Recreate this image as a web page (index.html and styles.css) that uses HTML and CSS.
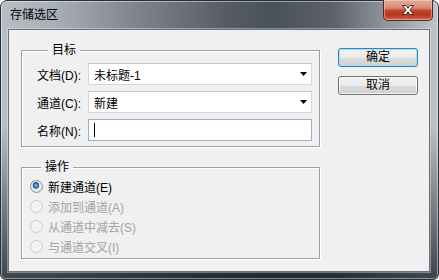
FILE: index.html
```html
<!DOCTYPE html>
<html lang="zh-CN">
<head>
    <meta charset="UTF-8">
    <meta name="viewport" content="width=device-width, initial-scale=1.0">
    <title>存储选区</title>
    <link rel="stylesheet" href="styles.css">
</head>
<body>
    <div class="window">
        <div class="titlebar">
            <span class="title">存储选区</span>
            <button class="close" title="关闭">
                <svg width="14" height="10" viewBox="0 0 14 10">
                    <path d="M1.5 0.5 L5 0.5 L7 3.2 L9 0.5 L12.5 0.5 L9 5 L12.5 9.5 L9 9.5 L7 6.8 L5 9.5 L1.5 9.5 L5 5 Z" fill="#fff" stroke="#4a2a24" stroke-width="1" stroke-linejoin="round"/>
                </svg>
            </button>
        </div>

        <div class="client">
            <div class="main">
                <fieldset class="group target">
                    <legend>目标</legend>
                    <div class="row">
                        <label>文档(D):</label>
                        <div class="combo">
                            <span>未标题-1</span>
                            <svg class="arrow" width="7" height="4" viewBox="0 0 7 4"><path d="M0 0 H7 L3.5 4 Z" fill="#000"/></svg>
                        </div>
                    </div>
                    <div class="row">
                        <label>通道(C):</label>
                        <div class="combo">
                            <span>新建</span>
                            <svg class="arrow" width="7" height="4" viewBox="0 0 7 4"><path d="M0 0 H7 L3.5 4 Z" fill="#000"/></svg>
                        </div>
                    </div>
                    <div class="row">
                        <label>名称(N):</label>
                        <div class="edit"><span class="caret"></span></div>
                    </div>
                </fieldset>

                <fieldset class="group ops">
                    <legend>操作</legend>
                    <label class="option"><input type="radio" name="op" checked> 新建通道(E)</label>
                    <label class="option disabled"><input type="radio" name="op" disabled> 添加到通道(A)</label>
                    <label class="option disabled"><input type="radio" name="op" disabled> 从通道中减去(S)</label>
                    <label class="option disabled"><input type="radio" name="op" disabled> 与通道交叉(I)</label>
                </fieldset>
            </div>

            <div class="buttons">
                <button class="btn default">确定</button>
                <button class="btn">取消</button>
            </div>
        </div>
    </div>
</body>
</html>
```

FILE: styles.css
```css
html, body { margin: 0; padding: 0; background: #fff; }
body { font-family: 'Liberation Sans', 'Noto Sans CJK SC', sans-serif; font-size: 12px; color: #000; }

.window {
    width: 439px; height: 280px; box-sizing: border-box;
    display: flex; flex-direction: column;
    border: 1px solid #2a2f35; border-radius: 7px 7px 6px 6px;
    box-shadow: inset 0 0 0 1px rgba(255,255,255,0.45);
    background:
        linear-gradient(to bottom, rgba(0,0,0,0) 0, rgba(0,0,0,0) 45%, rgba(16,28,36,0.75) 100%),
        linear-gradient(to right, #b8bec5 0%, #a9afb6 12%, #7c828a 32%, #555c66 52%, #48505a 62%, #5c626a 76%, #8f959c 88%, #bfc4c9 100%);
}

.titlebar { height: 28px; display: flex; align-items: flex-start; padding: 0 5px 0 9px; }
.title { line-height: 28px; color: #000; }
.close {
    margin-left: auto; margin-top: -1px; width: 50px; height: 21px; padding: 0;
    display: flex; align-items: center; justify-content: center;
    border: 1px solid #4b2b26; border-top: none; border-radius: 0 0 5px 5px;
    background: linear-gradient(to bottom, #e8ab9c 0%, #d98a76 40%, #c4442d 52%, #b8341e 75%, #cf6a52 100%);
    box-shadow: inset 0 0 0 1px rgba(255,220,210,0.45);
}

.client {
    flex: 1; margin: 0 8px 7px 7px; display: flex;
    background: #f0f0f0; border: 1px solid #68717c;
    box-shadow: 0 0 0 1px rgba(255,255,255,0.35);
}

.main { padding: 12px 0 0 12px; }

.group {
    margin: 0; padding: 0; width: 299px; box-sizing: border-box;
    border: 1px solid #a0a0a0;
    box-shadow: 1px 1px 0 #fff, inset 1px 1px 0 #fff;
}
.group legend { margin-left: 11px; padding: 0 4px; line-height: 16px; background: #f0f0f0; }

.target { padding: 5px 6px 5px 15px; display: flex; flex-direction: column; gap: 6px; }
.row { display: flex; align-items: center; height: 22px; }
.row label { width: 51px; }
.combo, .edit {
    width: 224px; height: 22px; box-sizing: border-box; background: #fff;
    display: flex; align-items: center; padding-left: 5px;
}
.combo { border: 1px solid #d4d7db; border-top-color: #c2c5ca; }
.combo .arrow { margin-left: auto; margin-right: 4px; }
.edit { border: 1px solid #97afcb; }
.caret { width: 1px; height: 14px; background: #000; }

.ops { margin-top: 12px; padding: 1px 0 2px 8px; }
.option { display: flex; align-items: center; height: 20px; gap: 4px; }
.option.disabled { color: #a3a3a3; }
.option input {
    appearance: none; -webkit-appearance: none; margin: 0 1px 0 0;
    width: 13px; height: 13px; border-radius: 50%; box-sizing: border-box;
    border: 1px solid #8f9296;
    background: radial-gradient(circle at 50% 45%, #f8f8f8 0, #e2e2e2 100%);
}
.option input:checked {
    background:
        radial-gradient(circle at 45% 40%, #a8dcf8 0, #3b8ad6 1.5px, #184f96 3px, rgba(24,79,150,0) 3.6px),
        radial-gradient(circle at 50% 45%, #fbfbfb 0, #dcdcdc 100%);
}
.option input:disabled { border-color: #cacaca; background: #f3f3f3; }

.buttons { margin-left: 18px; padding-top: 18px; display: flex; flex-direction: column; gap: 9px; }
.btn {
    width: 80px; height: 19px; padding: 0;
    font-family: inherit; font-size: 12px; line-height: 17px; color: #000;
    border: 1px solid #707070; border-radius: 3px;
    background: linear-gradient(to bottom, #f2f2f2 0%, #ebebeb 50%, #dddddd 51%, #cfcfcf 100%);
    box-shadow: inset 0 0 0 1px rgba(255,255,255,0.8);
}
.btn.default { border-color: #3c7fb1; box-shadow: inset 0 0 0 1px #9ee3fb; }
```
